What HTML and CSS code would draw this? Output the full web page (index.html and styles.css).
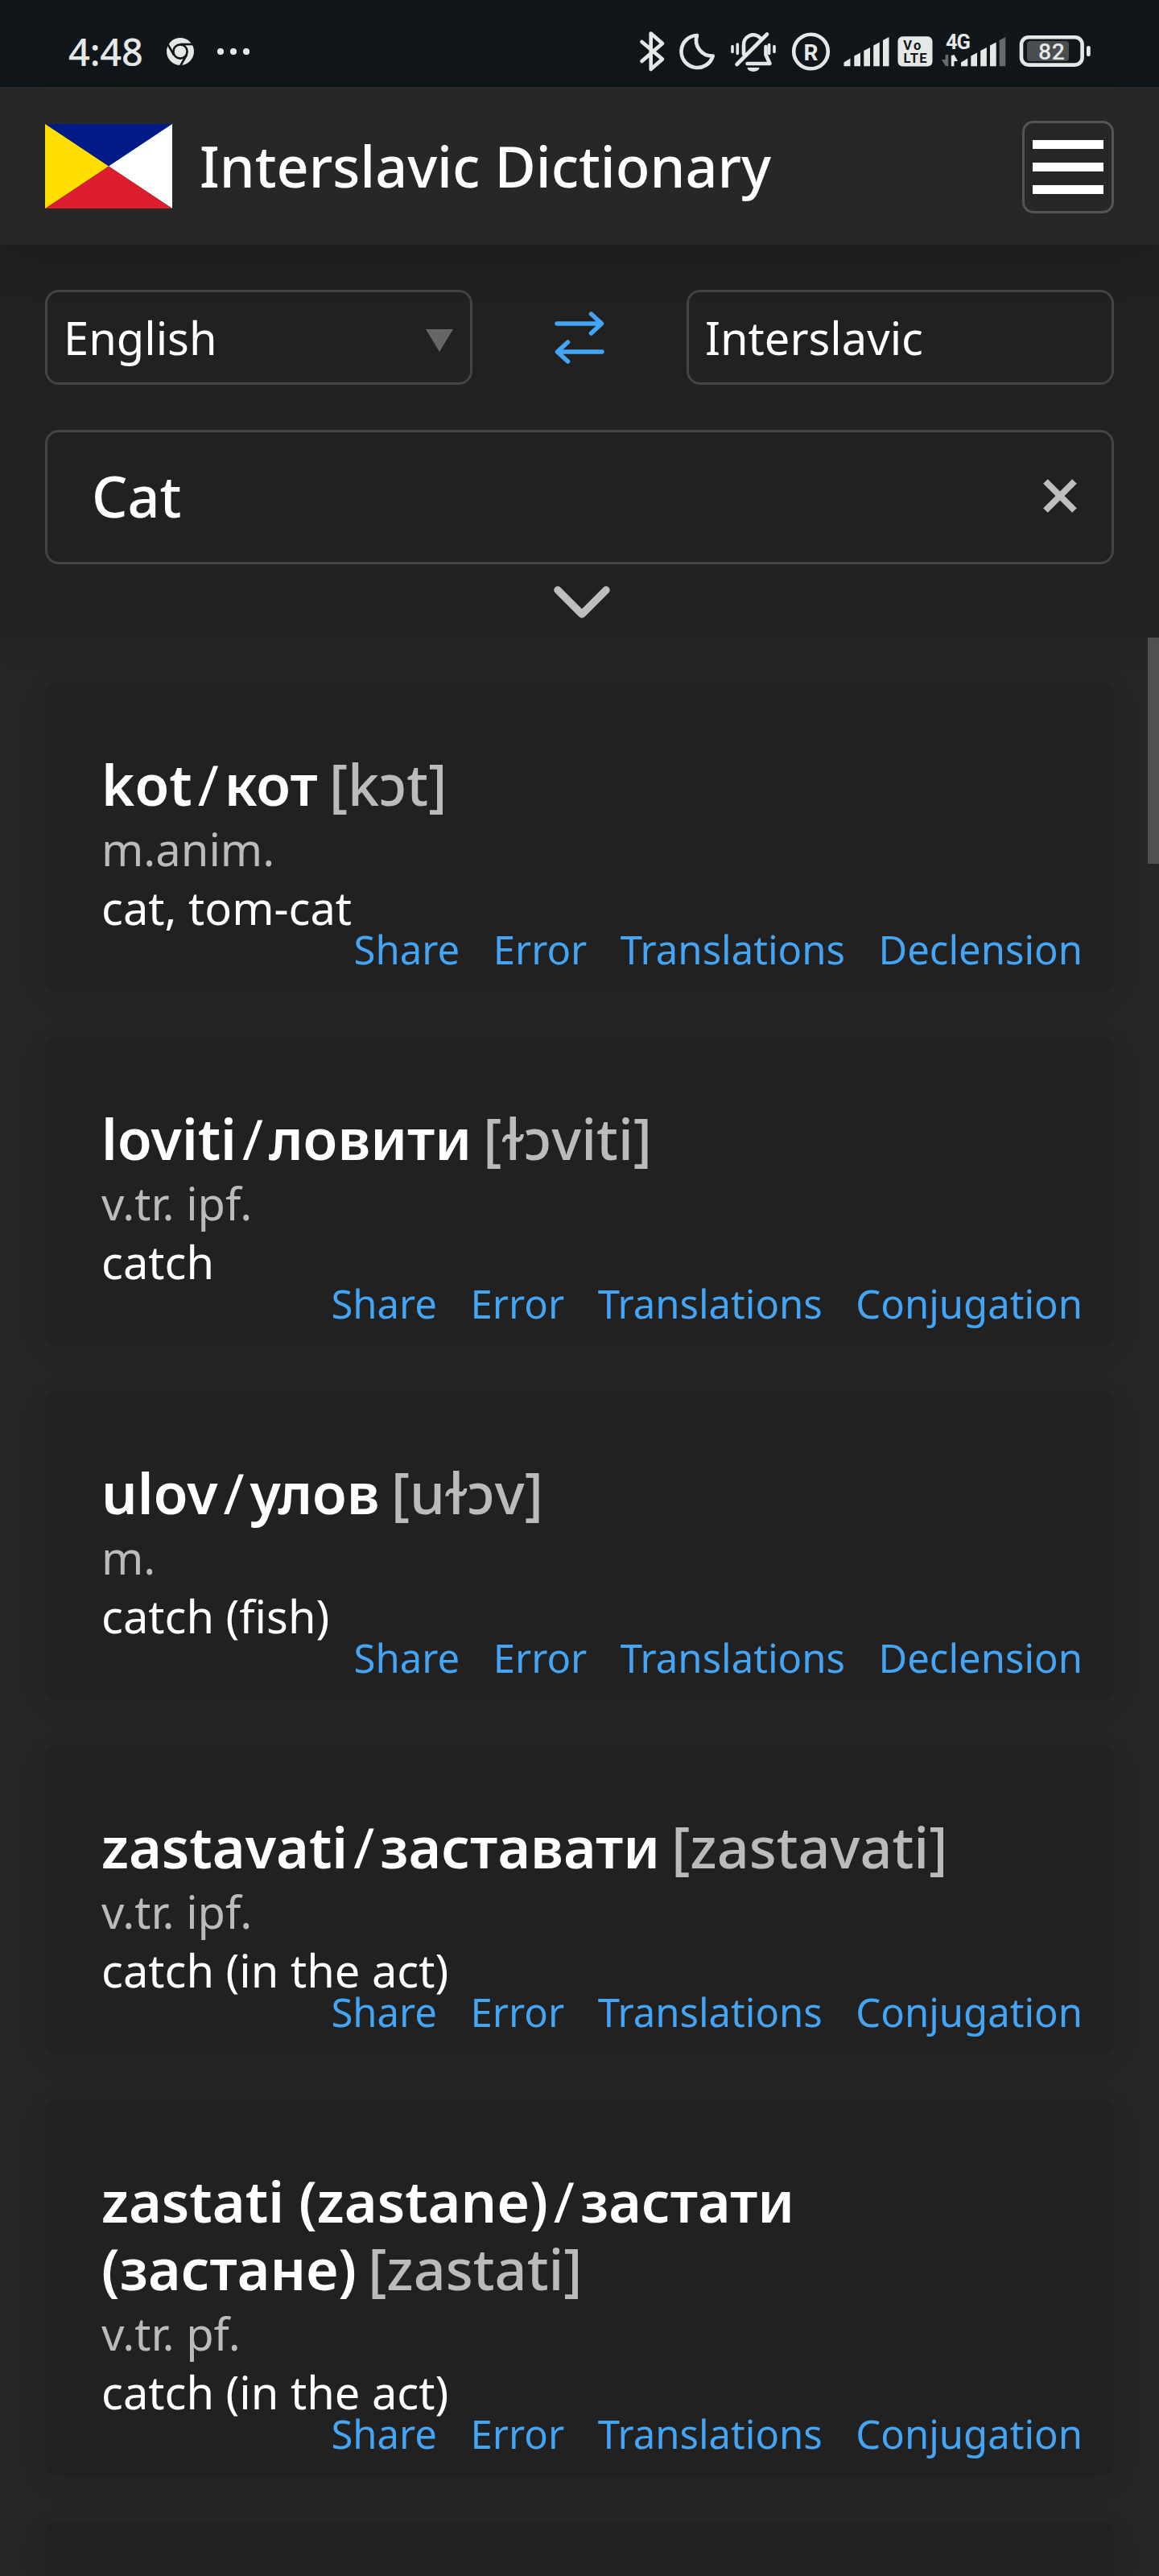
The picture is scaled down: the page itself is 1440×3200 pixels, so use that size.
FILE: index.html
```html
<!DOCTYPE html>
<html lang="en">
<head>
<meta charset="utf-8">
<title>Interslavic Dictionary</title>
<link rel="stylesheet" href="styles.css">
</head>
<body>
<div class="status">
  <div class="status-left">
    <span class="clock">4:48</span>
    <svg class="ico" width="110" height="108" viewBox="200 0 110 108">
      <circle cx="224" cy="64" r="17"/>
      <g fill="none" stroke="#101619" stroke-width="2.6">
        <circle cx="224" cy="64" r="8.6"/>
        <path d="M224 55h18"/>
        <path d="M224 55h18" transform="rotate(120 224 64)"/>
        <path d="M224 55h18" transform="rotate(240 224 64)"/>
      </g>
      <circle cx="274" cy="64" r="4.1"/><circle cx="290" cy="64" r="4.1"/><circle cx="306" cy="64" r="4.1"/>
    </svg>
  </div>
  <div class="status-right">
    <svg class="ico line" width="45" height="108" viewBox="790 0 45 108"><path d="M797.5 52l25.5 21.5-14.300 12.500v-44.500l14.300 12.500L797.500 76"/></svg>
    <svg class="ico line" width="63" height="108" viewBox="835 0 63 108"><path d="M866 44A20 20 0 1 0 885.700 69.500A19.500 19.500 0 0 1 866 44z"/></svg>
    <svg class="ico" width="76" height="108" viewBox="898 0 76 108">
      <g class="line"><path d="M924 67V56.500a12 12 0 0 1 20.500-9.500M953 42.500L915.500 80M951.500 58v10l5 11h-28"/></g>
      <g class="line thin"><path d="M910 57.500v7M916.300 55v11.500M955.600 55.500v11M962 57.500v7"/></g>
      <path d="M928.500 84h15a7.500 5 0 0 1-15 0z"/>
    </svg>
    <svg class="ico" width="66" height="108" viewBox="974 0 66 108"><circle class="line" cx="1007.500" cy="64" r="21.300"/><text x="1007.500" y="74.500" text-anchor="middle" font-size="28" font-weight="700">R</text></svg>
    <svg class="ico" width="70" height="108" viewBox="1040 0 70 108"><path d="M1048.500 77.500l8-5v9.800h-8zM1061.300 69.500l7.700-4v16.800h-7.700zM1073.300 63l7.700-4v23.300h-7.700zM1085.200 56.500l7.600-4v29.800h-7.600zM1097 50l7.500-4v36.300h-7.500z"/></svg>
    <svg class="ico" width="55" height="108" viewBox="1110 0 55 108"><rect x="1115.500" y="45.300" width="43" height="37.200" rx="6"/><g fill="#101619" font-size="16.500" font-weight="700"><text x="1122.300" y="62.400" textLength="22">Vo</text><text x="1122.500" y="77.800" textLength="29">LTE</text></g></svg>
    <svg class="ico" width="95" height="108" viewBox="1165 0 95 108">
      <text x="1175" y="61" font-size="25.500" font-weight="700" textLength="31">4G</text>
      <path d="M1181.800 69l3.700-1 4.500 8h-4.500v6.300h-3.700z"/>
      <path d="M1194 77.500l8.300-5v9.800h-8.300zM1206.300 69.500l7.700-4v16.800h-7.700zM1218.200 63l7.700-4v23.300h-7.700zM1230 56.500l7.700-4v29.800h-7.700z"/>
      <path class="dim" d="M1178.300 68h-3.700v6h-4.600l4.600 7.800 3.700.5zM1241.700 50l7.600-4v36.300h-7.600z"/>
    </svg>
    <svg class="ico" width="100" height="108" viewBox="1260 0 100 108"><rect x="1276" y="51" width="52" height="25" rx="4" fill="#4a4e50"/><rect class="line" x="1269" y="46.200" width="75.600" height="34.400" rx="9"/><rect x="1350" y="57" width="4.800" height="13" rx="2.200"/><text x="1290" y="74.400" font-size="28.500" font-weight="500" textLength="33">82</text></svg>
  </div>
</div>
<header class="header">
  <svg class="flag" width="158" height="105" viewBox="0 0 158 105"><path fill="#001b87" d="M0 0h158L79 52.500z"/><path fill="#fff" d="M158 0v105L79 52.500z"/><path fill="#dc1d2e" d="M0 105h158L79 52.500z"/><path fill="#ffde00" d="M0 0v105l79-52.500z"/></svg>
  <h1 class="brand">Interslavic Dictionary</h1>
  <button class="menu" aria-label="Menu"><span></span><span></span><span></span></button>
</header>
<section class="form">
  <div class="langs">
    <div class="select"><span>English</span><svg width="34" height="28" viewBox="0 0 34 28"><path fill="#666" d="M0 0h34L17 28z"/></svg></div>
    <svg class="swap" width="62" height="62" viewBox="0 0 62 62"><path d="M3 15h55M45.500 3L58.500 15 45.500 27M59 50H4M16.500 38L3.500 50l13 12"/></svg>
    <div class="select"><span>Interslavic</span></div>
  </div>
  <div class="search"><span>Cat</span><svg width="42" height="42" viewBox="0 0 42 42"><path d="M3 3l36 36M39 3L3 39" stroke="#bebebe" stroke-width="8"/></svg></div>
  <svg class="chevron" width="70" height="42" viewBox="0 0 70 42"><path d="M5 6l30 30L65 6"/></svg>
</section>
<main class="results">
  <article class="card">
    <h2 class="word"><b>kot</b><i>/</i><b>кот</b> <span>[kɔt]</span></h2>
    <p class="gram">m.anim.</p><p class="trans">cat, tom-cat</p>
    <nav class="links"><a>Share</a><a>Error</a><a>Translations</a><a>Declension</a></nav>
  </article>
  <article class="card">
    <h2 class="word"><b>loviti</b><i>/</i><b>ловити</b> <span>[ɫɔviti]</span></h2>
    <p class="gram">v.tr. ipf.</p><p class="trans">catch</p>
    <nav class="links"><a>Share</a><a>Error</a><a>Translations</a><a>Conjugation</a></nav>
  </article>
  <article class="card">
    <h2 class="word"><b>ulov</b><i>/</i><b>улов</b> <span>[uɫɔv]</span></h2>
    <p class="gram">m.</p><p class="trans">catch (fish)</p>
    <nav class="links"><a>Share</a><a>Error</a><a>Translations</a><a>Declension</a></nav>
  </article>
  <article class="card">
    <h2 class="word"><b>zastavati</b><i>/</i><b>заставати</b> <span>[zastavati]</span></h2>
    <p class="gram">v.tr. ipf.</p><p class="trans">catch (in the act)</p>
    <nav class="links"><a>Share</a><a>Error</a><a>Translations</a><a>Conjugation</a></nav>
  </article>
  <article class="card">
    <h2 class="word"><b>zastati (zastane)</b><i>/</i><b>застати (застане)</b> <span>[zastati]</span></h2>
    <p class="gram">v.tr. pf.</p><p class="trans">catch (in the act)</p>
    <nav class="links"><a>Share</a><a>Error</a><a>Translations</a><a>Conjugation</a></nav>
  </article>
  <article class="card"></article>
  <div class="scrollbar"></div>
</main>
</body>
</html>
```

FILE: styles.css
```css
* { box-sizing: border-box; }
body {
  margin: 0;
  width: 1440px;
  height: 3200px;
  overflow: hidden;
  display: flex;
  flex-direction: column;
  background: #262626;
  color: #fff;
  font-family: "Noto Sans", sans-serif;
  font-size: 56px;
}
h1, h2, p { margin: 0; font-weight: 400; }
svg { flex: none; display: block; }

.status {
  flex: none;
  height: 108px;
  background: #101619;
  color: #e6e8e8;
  display: flex;
  justify-content: space-between;
  padding: 0 80px 0 85px;
}
.status-left, .status-right { display: flex; align-items: center; }
.clock { width: 115px; font-size: 47px; font-weight: 500; line-height: 64px; letter-spacing: -0.2px; padding-top: 22px; height: 88px; }
.ico { fill: #e6e8e8; font-family: Roboto, sans-serif; }
.line { fill: none; stroke: #e6e8e8; stroke-width: 4.6; stroke-linecap: round; stroke-linejoin: round; }
.thin { stroke-width: 3.6; }
.dim { fill: #676b6d; }

.header {
  position: relative;
  z-index: 2;
  flex: none;
  height: 196px;
  padding: 3px 56px 0;
  display: flex;
  align-items: center;
  background: #272727;
  box-shadow: 0 14px 56px -7px rgba(0, 0, 0, .22);
}
.flag { margin-bottom: 2px; }
.brand { margin: 0 0 3px 34px; font-size: 70px; font-weight: 500; line-height: 84px; white-space: nowrap; }
.menu {
  margin-left: auto;
  width: 114px;
  height: 115px;
  padding: 0 10px;
  display: flex;
  flex-direction: column;
  justify-content: center;
  gap: 17px;
  background: none;
  border: 3px solid #555;
  border-radius: 14px;
}
.menu span { height: 11px; background: #fff; }

.form {
  position: relative;
  z-index: 1;
  flex: none;
  height: 488px;
  padding: 56px 56px 0;
  background: #212121;
  box-shadow: 0 7px 49px rgba(0, 0, 0, .06);
}
.langs { display: flex; justify-content: space-between; align-items: center; }
.select {
  width: 531px;
  height: 118px;
  padding: 0 21px 0 20px;
  display: flex;
  align-items: center;
  justify-content: space-between;
  border: 3px solid #444;
  border-radius: 17px;
}
.select svg { margin-top: 8px; }
.swap { margin-bottom: 3px; fill: none; stroke: #44a5f5; stroke-width: 5.5; stroke-linecap: round; stroke-linejoin: round; overflow: visible; }
.search {
  margin-top: 56px;
  height: 167px;
  padding: 0 43px 3px 55px;
  display: flex;
  align-items: center;
  justify-content: space-between;
  border: 3px solid #444;
  border-radius: 17px;
  font-size: 70px;
  font-weight: 500;
}
.chevron { margin: 26px 0 0 632px; fill: none; stroke: #bebebe; stroke-width: 9.5; stroke-linecap: round; stroke-linejoin: round; }

.results {
  position: relative;
  flex: 1;
  min-height: 0;
  overflow: hidden;
  padding: 56px 56px 0;
  display: flex;
  flex-direction: column;
  gap: 56px;
}
.card {
  flex: none;
  min-height: 384px;
  padding: 84px 39px 0 70px;
  background: #212121;
  border-radius: 17px;
  box-shadow: 0 7px 49px rgba(0, 0, 0, .06);
}
.card:nth-last-child(2) { min-height: 68px; padding: 0; border-radius: 17px 17px 0 0; }
.word { font-size: 70px; font-weight: 500; line-height: 84px; max-width: 1188px; }
.word b { font-weight: 600; }
.word i { font-style: normal; font-weight: 400; margin: 0 7px; }
.word span { margin-left: -4px; }
.word span, .gram { color: #bbb; }
.gram, .trans { line-height: 73px; }
.gram { margin-top: 2px; }
.links {
  margin-top: -15px;
  padding-bottom: 23px;
  display: flex;
  justify-content: flex-end;
  gap: 41.500px;
  font-size: 49px;
  line-height: 60px;
  color: #44a5f5;
}
.scrollbar { position: absolute; top: 0; right: 0; width: 14px; height: 281px; background: #515151; }
```
